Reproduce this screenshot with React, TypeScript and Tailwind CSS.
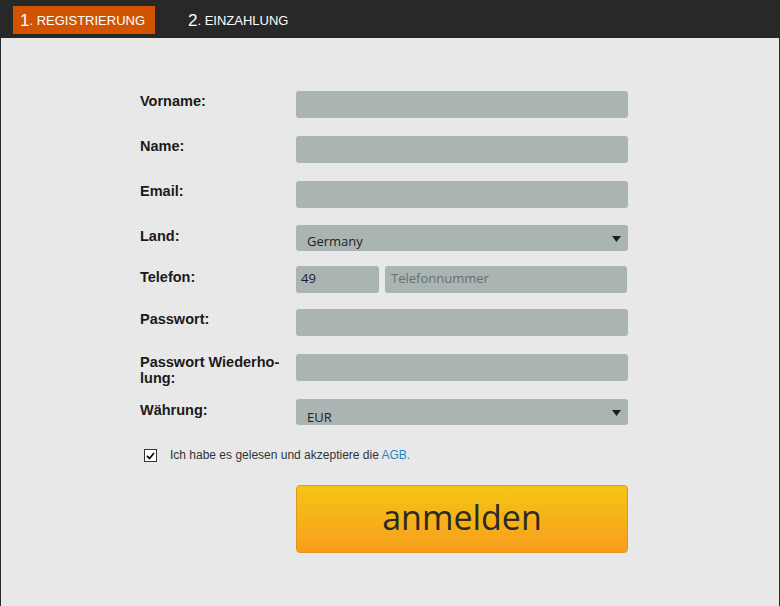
import React from "react"

const labelCls =
  "w-[156px] shrink-0 font-['Liberation_Sans',Arial,sans-serif] text-[14.5px] leading-[14px] font-bold text-[#1a1a1a] whitespace-nowrap"
const boxCls = "bg-[#a9b4b3] rounded-[3px]"

function Arrow() {
  return (
    <svg width="9" height="6" viewBox="0 0 9 6" className="absolute right-[7px] top-[11px]">
      <path d="M0 0 H9 L4.5 6 Z" fill="#1e1e1e" />
    </svg>
  )
}

function Row({
  label,
  className = "",
  labelPad = "pt-[3px]",
  children,
}: {
  label: React.ReactNode
  className?: string
  labelPad?: string
  children: React.ReactNode
}) {
  return (
    <div className={`flex items-start ${className}`}>
      <div className={`${labelCls} ${labelPad}`}>{label}</div>
      {children}
    </div>
  )
}

export default function App() {
  return (
    <div className="w-[780px] h-[606px] bg-[#282828] flex flex-col overflow-hidden">
      {/* Steps */}
      <div className="h-[38px] shrink-0 flex items-start pt-[6px] pl-[13px] font-['Liberation_Sans',Arial,sans-serif] text-white">
        <div className="h-[28px] w-[142px] bg-[#d35400] flex items-center pl-[7px]">
          <span className="text-[17px] leading-none">1</span>
          <span className="text-[13px] leading-none">. REGISTRIERUNG</span>
        </div>
        <div className="h-[28px] flex items-center ml-[33px]">
          <span className="text-[17px] leading-none">2</span>
          <span className="text-[13px] leading-none">. EINZAHLUNG</span>
        </div>
      </div>

      {/* Form */}
      <div className="flex-1 bg-[#e8e8e8] ml-[1px] mr-[1px] pl-[139px] pt-[53px] font-['Open_Sans',sans-serif] text-[13px] text-[#1f1f1f]">
        <Row label="Vorname:" className="h-[27px]">
          <div className={`${boxCls} w-[332px] h-[27px]`} />
        </Row>
        <Row label="Name:" className="h-[27px] mt-[18px]">
          <div className={`${boxCls} w-[332px] h-[27px]`} />
        </Row>
        <Row label="Email:" className="h-[27px] mt-[18px]">
          <div className={`${boxCls} w-[332px] h-[27px]`} />
        </Row>
        <Row label="Land:" className="h-[26px] mt-[17px]" labelPad="pt-[4px]">
          <div className={`${boxCls} relative w-[332px] h-[26px] pl-[11px] pt-[8px] leading-[16px]`}>
            Germany
            <Arrow />
          </div>
        </Row>
        <Row label="Telefon:" className="h-[27px] mt-[15px]" labelPad="pt-[4px]">
          <div className="flex gap-[6px]">
            <div className={`${boxCls} w-[83px] h-[27px] pl-[5px] pt-[4px] leading-[16px]`}>49</div>
            <div className={`${boxCls} w-[242px] h-[27px] pl-[6px] pt-[4px] leading-[16px] text-[#667170]`}>
              Telefonnummer
            </div>
          </div>
        </Row>
        <Row label="Passwort:" className="h-[27px] mt-[16px]">
          <div className={`${boxCls} w-[332px] h-[27px]`} />
        </Row>
        <Row
          label={
            <>
              <span className="block h-[16px] leading-[16px]">Passwort Wiederho-</span>
              <span className="block h-[16px] leading-[16px]">lung:</span>
            </>
          }
          className="h-[27px] mt-[18px]"
          labelPad="pt-[0px]"
        >
          <div className={`${boxCls} w-[332px] h-[27px]`} />
        </Row>
        <Row label="Währung:" className="h-[26px] mt-[18px]" labelPad="pt-[4px]">
          <div className={`${boxCls} relative w-[332px] h-[26px] pl-[11px] pt-[10px] leading-[16px] overflow-hidden`}>
            EUR
            <Arrow />
          </div>
        </Row>

        {/* Terms */}
        <div className="flex items-center mt-[24px] ml-[4px] font-['Liberation_Sans',Arial,sans-serif] text-[12px] text-[#333]">
          <div className="w-[13px] h-[13px] border border-[#333] bg-white flex items-center justify-center">
            <svg width="9" height="8" viewBox="0 0 9 8">
              <path d="M1 4 L3.5 6.5 L8 1" stroke="#111" strokeWidth="1.8" fill="none" />
            </svg>
          </div>
          <span className="ml-[13px] leading-[13px]">
            Ich habe es gelesen und akzeptiere die <span className="text-[#2a86c0]">AGB.</span>
          </span>
        </div>

        {/* Submit */}
        <button className="mt-[23px] ml-[156px] w-[332px] h-[68px] rounded-[4px] border border-[#e0981c] bg-gradient-to-b from-[#f4c514] to-[#f79e1c] text-[34px] leading-none text-[#2a2a24] flex items-center justify-center pb-[4px]">
          anmelden
        </button>
      </div>
    </div>
  )
}
